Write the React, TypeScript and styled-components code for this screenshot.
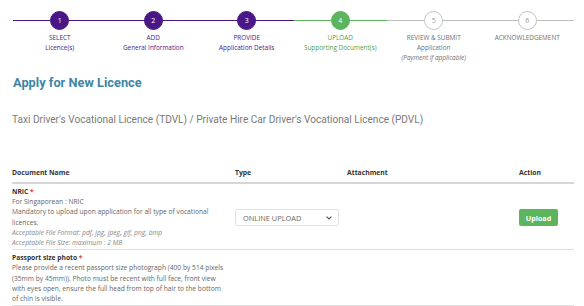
import React from 'react';
import styled, {createGlobalStyle} from 'styled-components';

const GlobalStyle = createGlobalStyle`
    html, body {
        margin: 0;
        padding: 0;
        background: #fff;
    }
    body {
        font-family: 'Open Sans', 'Liberation Sans', sans-serif;
        color: #555;
    }
`;

type StepState = 'done' | 'active' | 'todo';

type Step = {
    num: number;
    title: string;
    sub?: string;
    note?: string;
    state: StepState;
};

const steps: Step[] = [
    {num: 1, title: 'SELECT', sub: 'Licence(s)', state: 'done'},
    {num: 2, title: 'ADD', sub: 'General Information', state: 'done'},
    {num: 3, title: 'PROVIDE', sub: 'Application Details', state: 'done'},
    {num: 4, title: 'UPLOAD', sub: 'Supporting Document(s)', state: 'active'},
    {num: 5, title: 'REVIEW & SUBMIT', sub: 'Application', note: '(Payment if applicable)', state: 'todo'},
    {num: 6, title: 'ACKNOWLEDGEMENT', state: 'todo'},
];

const PURPLE = '#4a1786';
const GREEN = '#5cb55c';
const GREY = '#bdbdbd';

const stateColor = (s: StepState) => (s === 'done' ? PURPLE : s === 'active' ? GREEN : GREY);
const textColor = (s: StepState) => (s === 'done' ? PURPLE : s === 'active' ? '#4f9f45' : '#6f6f6f');

const App = () => (
    <Page>
        <GlobalStyle/>
        <Stepper>
            {steps.map((step) => (
                <StepItem key={step.num}>
                    <Track $state={step.state}>
                        <Circle $state={step.state}>{step.num}</Circle>
                    </Track>
                    <StepLabel $state={step.state}>
                        <div>{step.title}</div>
                        {step.sub && <div>{step.sub}</div>}
                        {step.note && <StepNote>{step.note}</StepNote>}
                    </StepLabel>
                </StepItem>
            ))}
        </Stepper>

        <Heading>{'Apply for New Licence'}</Heading>
        <Subtitle>{"Taxi Driver's Vocational Licence (TDVL) / Private Hire Car Driver's Vocational Licence (PDVL)"}</Subtitle>

        <Table>
            <HeadRow>
                <HeadCell>{'Document Name'}</HeadCell>
                <HeadCell>{'Type'}</HeadCell>
                <HeadCell>{'Attachment'}</HeadCell>
                <HeadCell>{'Action'}</HeadCell>
            </HeadRow>
            <Row>
                <DocCell>
                    <DocTitle>{'NRIC'}<Required>{' *'}</Required></DocTitle>
                    <div>{'For Singaporean : NRIC'}</div>
                    <div>{'Mandatory to upload upon application for all type of vocational licences.'}</div>
                    <Hint>{'Acceptable File Format: pdf, jpg, jpeg, gif, png, bmp'}</Hint>
                    <Hint>{'Acceptable File Size: maximum : 2 MB'}</Hint>
                </DocCell>
                <MidCell>
                    <SelectBox>
                        <span>{'ONLINE UPLOAD'}</span>
                        <svg
                            width='6'
                            height='4'
                            viewBox='0 0 6 4'
                        >
                            <path
                                d='M0.6 0.6 L3 3 L5.4 0.6'
                                fill='none'
                                stroke='#555'
                                strokeWidth='1.1'
                            />
                        </svg>
                    </SelectBox>
                </MidCell>
                <MidCell/>
                <MidCell>
                    <UploadButton>{'Upload'}</UploadButton>
                </MidCell>
            </Row>
            <Row>
                <DocCell>
                    <DocTitle>{'Passport size photo'}<Required>{' *'}</Required></DocTitle>
                    <div>{'Please provide a recent passport size photograph (400 by 514 pixels (35mm by 45mm)). Photo must be recent with full face, front view with eyes open, ensure the full head from top of hair to the bottom of chin is visible.'}</div>
                </DocCell>
                <MidCell/>
                <MidCell/>
                <MidCell/>
            </Row>
        </Table>
    </Page>
);

export default App;

const Page = styled.div`
    width: 584px;
    height: 306px;
    overflow: hidden;
    display: flex;
    flex-direction: column;
`;

const Stepper = styled.div`
    display: grid;
    grid-template-columns: repeat(6, 1fr);
    padding: 11px 10px 0 13px;
`;

const StepItem = styled.div`
    display: flex;
    flex-direction: column;
    align-items: center;
`;

const Track = styled.div<{$state: StepState}>`
    width: 100%;
    display: flex;
    justify-content: center;
    background: linear-gradient(
        to bottom,
        transparent 9px,
        ${({$state}) => stateColor($state)} 9px,
        ${({$state}) => stateColor($state)} 10.5px,
        transparent 10.5px
    );
`;

const Circle = styled.div<{$state: StepState}>`
    box-sizing: border-box;
    width: 19px;
    height: 19px;
    border-radius: 50%;
    display: flex;
    align-items: center;
    justify-content: center;
    font-size: 7px;
    background: ${({$state}) => ($state === 'todo' ? '#fff' : stateColor($state))};
    border: 1px solid ${({$state}) => ($state === 'todo' ? '#c4c4c4' : stateColor($state))};
    color: ${({$state}) => ($state === 'todo' ? '#9a9a9a' : '#fff')};
`;

const StepLabel = styled.div<{$state: StepState}>`
    margin-top: 3px;
    text-align: center;
    font-size: 6.4px;
    line-height: 10px;
    color: ${({$state}) => textColor($state)};
    white-space: nowrap;
`;

const StepNote = styled.div`
    font-style: italic;
`;

const Heading = styled.h1`
    margin: 12px 0 0 13px;
    font-family: Roboto, 'Liberation Sans', sans-serif;
    font-weight: 700;
    font-size: 12.8px;
    line-height: 16px;
    color: #3f86a5;
`;

const Subtitle = styled.div`
    margin: 22px 0 0 12px;
    font-family: Roboto, 'Liberation Sans', sans-serif;
    font-size: 10.1px;
    line-height: 14px;
    color: #7a7a7a;
`;

const Table = styled.div`
    margin: 41px 10px 0 12px;
    display: flex;
    flex-direction: column;
`;

const HeadRow = styled.div`
    display: grid;
    grid-template-columns: 223px 112px 172px 1fr;
    border-bottom: 2px solid #d6d6d6;
    padding-bottom: 4px;
`;

const HeadCell = styled.div`
    font-size: 6.8px;
    font-weight: 700;
    line-height: 10px;
    color: #333;
`;

const Row = styled.div`
    display: grid;
    grid-template-columns: 223px 112px 172px 1fr;
    border-bottom: 1px solid #dedede;
    padding: 3px 0 1px;
`;

const DocCell = styled.div`
    padding-right: 8px;
    font-size: 6.7px;
    line-height: 10.2px;
    color: #666;
`;

const DocTitle = styled.div`
    font-weight: 700;
    color: #333;
`;

const Required = styled.span`
    color: #e53935;
`;

const Hint = styled.div`
    font-style: italic;
    color: #888;
`;

const MidCell = styled.div`
    display: flex;
    align-items: center;
`;

const SelectBox = styled.div`
    box-sizing: border-box;
    width: 104px;
    height: 17px;
    padding: 0 6px 0 7px;
    display: flex;
    align-items: center;
    justify-content: space-between;
    border: 1px solid #e2e2e2;
    border-radius: 2px;
    font-size: 7.4px;
    color: #666;
`;

const UploadButton = styled.button`
    box-sizing: border-box;
    width: 39px;
    height: 17px;
    padding: 0;
    border: none;
    border-radius: 2px;
    background: ${GREEN};
    color: #fff;
    font-family: 'Open Sans', 'Liberation Sans', sans-serif;
    font-size: 7.2px;
    font-weight: 700;
`;
